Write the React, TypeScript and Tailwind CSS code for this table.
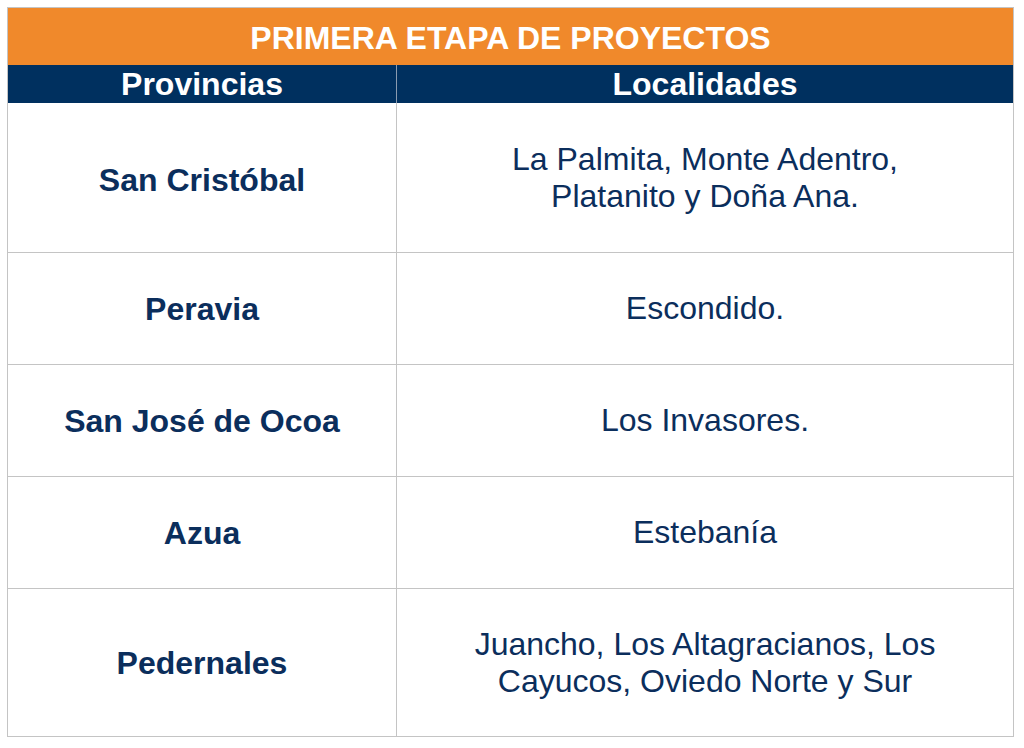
import React from "react";

const rows: { p: string; l: string[]; h: string }[] = [
  { p: "San Cristóbal", l: ["La Palmita, Monte Adentro,", "Platanito y Doña Ana."], h: "h-[149px]" },
  { p: "Peravia", l: ["Escondido."], h: "h-[112px]" },
  { p: "San José de Ocoa", l: ["Los Invasores."], h: "h-[112px]" },
  { p: "Azua", l: ["Estebanía"], h: "h-[112px]" },
  { p: "Pedernales", l: ["Juancho, Los Altagracianos, Los", "Cayucos, Oviedo Norte y Sur"], h: "h-[148px]" },
];

export default function App() {
  return (
    <div className="w-[1024px] h-[748px] bg-white pt-[7px] pl-[7px]" style={{ fontFamily: '"Liberation Sans", Arial, sans-serif' }}>
      <div className="w-[1007px] border border-[#c4c4c4] flex flex-col">
        <div className="h-[57px] bg-[#f0892b] flex items-center justify-center text-white font-bold text-[32px] leading-none pt-[2px]">
          PRIMERA ETAPA DE PROYECTOS
        </div>
        <div className="h-[38px] bg-[#00305f] flex text-white font-bold text-[32px] leading-none">
          <div className="w-[389px] border-r border-[#8a9bb0] flex items-center justify-center">Provincias</div>
          <div className="flex-1 flex items-center justify-center">Localidades</div>
        </div>
        {rows.map((r, i) => (
          <div key={i} className={`${r.h} flex text-[#0b2e5c] ${i > 0 ? "border-t border-[#c4c4c4]" : ""}`}>
            <div className={`w-[389px] border-r border-[#c4c4c4] flex items-center justify-center font-bold text-[32px] ${i === 0 ? "pt-[5px]" : ""}`}>
              {r.p}
            </div>
            <div className="flex-1 flex flex-col items-center justify-center text-[32px] leading-[37px]">
              {r.l.map((t, j) => (
                <div key={j}>{t}</div>
              ))}
            </div>
          </div>
        ))}
      </div>
    </div>
  );
}
